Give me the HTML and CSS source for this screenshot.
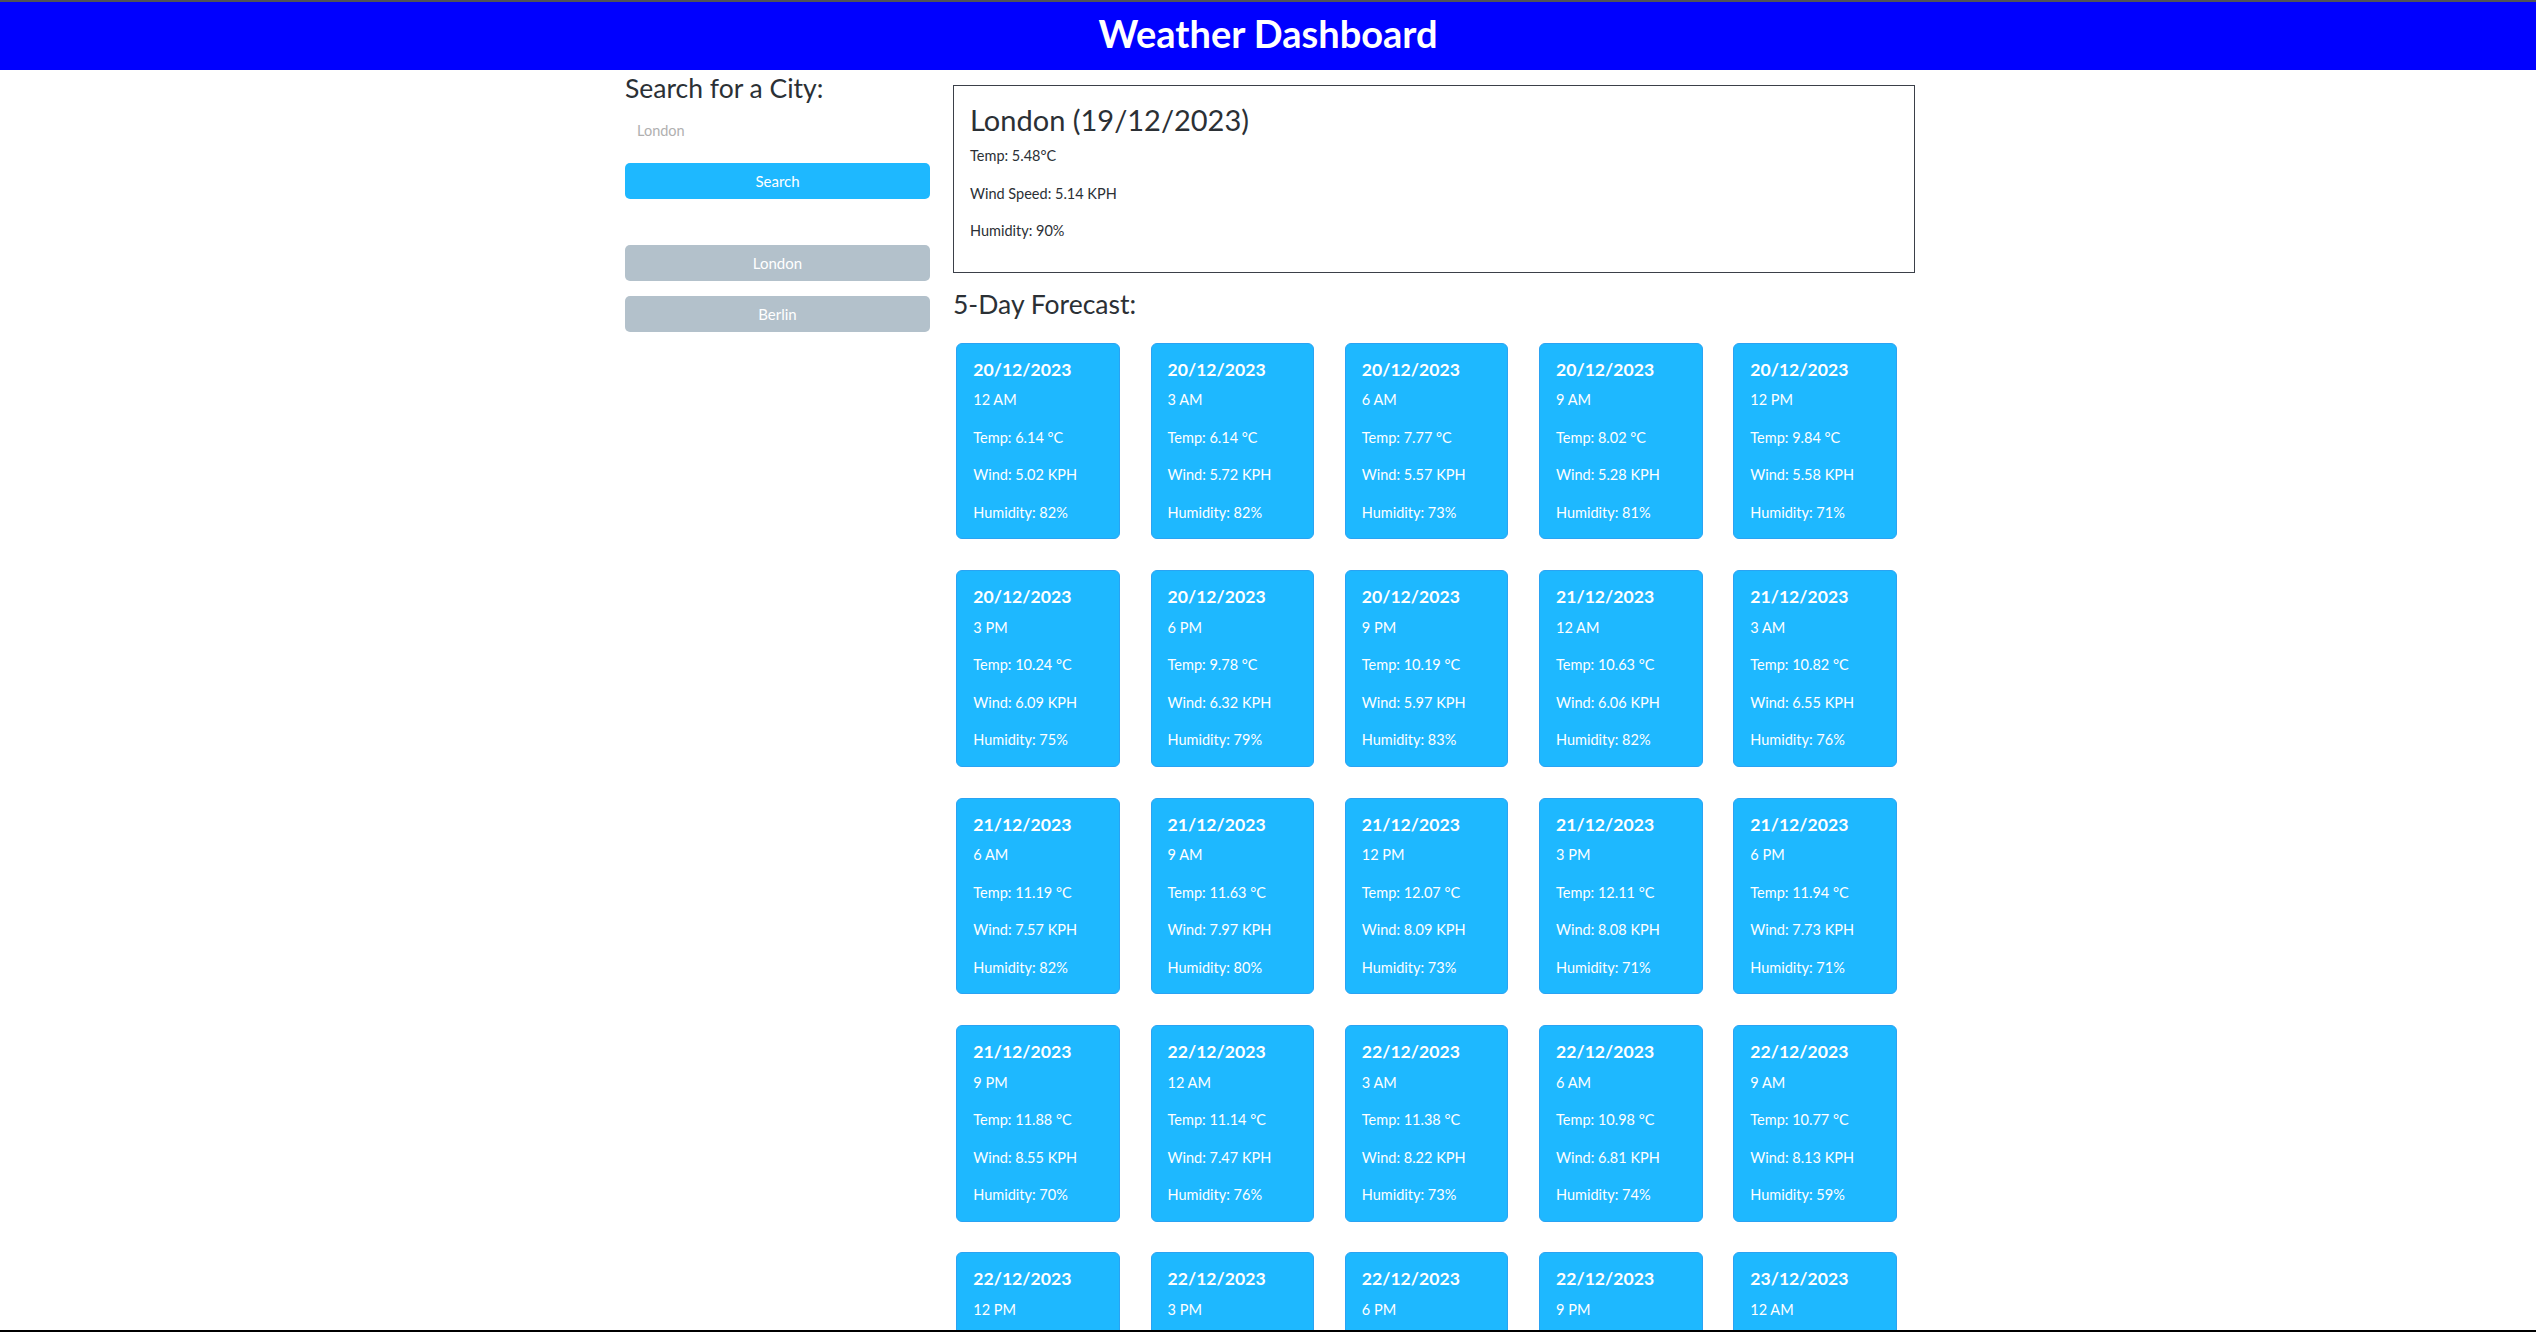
FILE: index.html
```html
<!DOCTYPE html>
<html lang="en">
<head>
<meta charset="utf-8">
<title>Weather Dashboard</title>
<link rel="stylesheet" href="styles.css">
</head>
<body>
<header class="topbar"><h1 class="title">Weather Dashboard</h1></header>
<div class="container">
  <aside class="sidebar">
    <h4 class="side-title">Search for a City:</h4>
    <input class="city-input" type="text" placeholder="London">
    <button class="btn btn-search">Search</button>
    <div class="history">
      <button class="btn btn-history">London</button>
      <button class="btn btn-history">Berlin</button>
    </div>
  </aside>
  <main class="content">
    <section class="current">
      <h2 class="current-title">London (19/12/2023)</h2>
      <p class="current-line">Temp: 5.48°C</p>
      <p class="current-line">Wind Speed: 5.14 KPH</p>
      <p class="current-line">Humidity: 90%</p>
    </section>
    <h4 class="forecast-title">5-Day Forecast:</h4>
    <div class="forecast-grid">
      <div class="card"><h5 class="card-date">20/12/2023</h5><p>12 AM</p><p>Temp: 6.14 °C</p><p>Wind: 5.02 KPH</p><p>Humidity: 82%</p></div>
      <div class="card"><h5 class="card-date">20/12/2023</h5><p>3 AM</p><p>Temp: 6.14 °C</p><p>Wind: 5.72 KPH</p><p>Humidity: 82%</p></div>
      <div class="card"><h5 class="card-date">20/12/2023</h5><p>6 AM</p><p>Temp: 7.77 °C</p><p>Wind: 5.57 KPH</p><p>Humidity: 73%</p></div>
      <div class="card"><h5 class="card-date">20/12/2023</h5><p>9 AM</p><p>Temp: 8.02 °C</p><p>Wind: 5.28 KPH</p><p>Humidity: 81%</p></div>
      <div class="card"><h5 class="card-date">20/12/2023</h5><p>12 PM</p><p>Temp: 9.84 °C</p><p>Wind: 5.58 KPH</p><p>Humidity: 71%</p></div>

      <div class="card"><h5 class="card-date">20/12/2023</h5><p>3 PM</p><p>Temp: 10.24 °C</p><p>Wind: 6.09 KPH</p><p>Humidity: 75%</p></div>
      <div class="card"><h5 class="card-date">20/12/2023</h5><p>6 PM</p><p>Temp: 9.78 °C</p><p>Wind: 6.32 KPH</p><p>Humidity: 79%</p></div>
      <div class="card"><h5 class="card-date">20/12/2023</h5><p>9 PM</p><p>Temp: 10.19 °C</p><p>Wind: 5.97 KPH</p><p>Humidity: 83%</p></div>
      <div class="card"><h5 class="card-date">21/12/2023</h5><p>12 AM</p><p>Temp: 10.63 °C</p><p>Wind: 6.06 KPH</p><p>Humidity: 82%</p></div>
      <div class="card"><h5 class="card-date">21/12/2023</h5><p>3 AM</p><p>Temp: 10.82 °C</p><p>Wind: 6.55 KPH</p><p>Humidity: 76%</p></div>

      <div class="card"><h5 class="card-date">21/12/2023</h5><p>6 AM</p><p>Temp: 11.19 °C</p><p>Wind: 7.57 KPH</p><p>Humidity: 82%</p></div>
      <div class="card"><h5 class="card-date">21/12/2023</h5><p>9 AM</p><p>Temp: 11.63 °C</p><p>Wind: 7.97 KPH</p><p>Humidity: 80%</p></div>
      <div class="card"><h5 class="card-date">21/12/2023</h5><p>12 PM</p><p>Temp: 12.07 °C</p><p>Wind: 8.09 KPH</p><p>Humidity: 73%</p></div>
      <div class="card"><h5 class="card-date">21/12/2023</h5><p>3 PM</p><p>Temp: 12.11 °C</p><p>Wind: 8.08 KPH</p><p>Humidity: 71%</p></div>
      <div class="card"><h5 class="card-date">21/12/2023</h5><p>6 PM</p><p>Temp: 11.94 °C</p><p>Wind: 7.73 KPH</p><p>Humidity: 71%</p></div>

      <div class="card"><h5 class="card-date">21/12/2023</h5><p>9 PM</p><p>Temp: 11.88 °C</p><p>Wind: 8.55 KPH</p><p>Humidity: 70%</p></div>
      <div class="card"><h5 class="card-date">22/12/2023</h5><p>12 AM</p><p>Temp: 11.14 °C</p><p>Wind: 7.47 KPH</p><p>Humidity: 76%</p></div>
      <div class="card"><h5 class="card-date">22/12/2023</h5><p>3 AM</p><p>Temp: 11.38 °C</p><p>Wind: 8.22 KPH</p><p>Humidity: 73%</p></div>
      <div class="card"><h5 class="card-date">22/12/2023</h5><p>6 AM</p><p>Temp: 10.98 °C</p><p>Wind: 6.81 KPH</p><p>Humidity: 74%</p></div>
      <div class="card"><h5 class="card-date">22/12/2023</h5><p>9 AM</p><p>Temp: 10.77 °C</p><p>Wind: 8.13 KPH</p><p>Humidity: 59%</p></div>

      <div class="card"><h5 class="card-date">22/12/2023</h5><p>12 PM</p><p>Temp: 10.52 °C</p><p>Wind: 7.91 KPH</p><p>Humidity: 61%</p></div>
      <div class="card"><h5 class="card-date">22/12/2023</h5><p>3 PM</p><p>Temp: 10.13 °C</p><p>Wind: 7.44 KPH</p><p>Humidity: 66%</p></div>
      <div class="card"><h5 class="card-date">22/12/2023</h5><p>6 PM</p><p>Temp: 9.87 °C</p><p>Wind: 7.02 KPH</p><p>Humidity: 70%</p></div>
      <div class="card"><h5 class="card-date">22/12/2023</h5><p>9 PM</p><p>Temp: 9.61 °C</p><p>Wind: 6.88 KPH</p><p>Humidity: 74%</p></div>
      <div class="card"><h5 class="card-date">23/12/2023</h5><p>12 AM</p><p>Temp: 9.40 °C</p><p>Wind: 6.71 KPH</p><p>Humidity: 77%</p></div>
    </div>
  </main>
</div>
<div class="frame-bottom"></div>
</body>
</html>
```

FILE: styles.css
```css
* { box-sizing: border-box; }

html, body {
  margin: 0;
  padding: 0;
  background: #ffffff;
}

body {
  font-family: Lato, "Open Sans", "Noto Sans", sans-serif;
  color: #212529;
}

.topbar {
  height: 70px;
  border-top: 2px solid #505258;
  background: #0000ff;
  display: flex;
  align-items: center;
  justify-content: center;
}

.title {
  margin: 0 0 5px;
  color: #ffffff;
  font-size: 38px;
  font-weight: 700;
  line-height: 1.2;
}

.container {
  width: 1294px;
  margin: 0 auto;
  padding-left: 4px;
  display: flex;
  align-items: flex-start;
  gap: 23px;
}

.sidebar {
  width: 305px;
  flex: 0 0 305px;
  display: flex;
  flex-direction: column;
}

.side-title {
  margin: 3px 0 0;
  font-size: 26.5px;
  font-weight: 400;
  line-height: 1.2;
  color: #2b3035;
}

.city-input {
  display: block;
  width: 100%;
  height: 36px;
  margin-top: 8px;
  padding: 0 12px;
  border: none;
  outline: none;
  font-family: Lato, "Open Sans", sans-serif;
  font-size: 14.5px;
  color: #333;
  background: transparent;
}

.city-input::placeholder {
  color: #b0b0b0;
}

.btn {
  display: block;
  width: 100%;
  height: 36px;
  border: none;
  border-radius: 5px;
  color: #ffffff;
  font-family: Lato, "Open Sans", sans-serif;
  font-size: 15px;
  cursor: pointer;
}

.btn-search {
  margin-top: 14px;
  background: #1eb8ff;
}

.history {
  margin-top: 46px;
  display: flex;
  flex-direction: column;
  gap: 15px;
}

.btn-history {
  background: #b3c1cb;
}

.content {
  width: 962px;
  flex: 0 0 962px;
  margin-top: 15px;
}

.current {
  border: 1px solid #3b4049;
  padding: 16px 16px 14px;
  height: 188px;
}

.current-title {
  margin: 0 0 7px;
  font-size: 29px;
  font-weight: 400;
  line-height: 36px;
  color: #2b3035;
}

.current-line {
  margin: 0 0 16.5px;
  font-size: 14.5px;
  line-height: 21px;
  color: #2b3035;
}

.forecast-title {
  margin: 16px 0 22px;
  font-size: 26.5px;
  font-weight: 400;
  line-height: 1.2;
  color: #2b3035;
}

.forecast-grid {
  display: grid;
  grid-template-columns: repeat(5, 163.5px);
  column-gap: 30.75px;
  row-gap: 30.8px;
  padding-left: 3.3px;
  padding-bottom: 40px;
}

.card {
  background: #1eb8ff;
  border: 1px solid #2aa3f3;
  border-radius: 6px;
  padding: 15px 16px 15.5px;
  color: #ffffff;
}

.card-date {
  margin: 0 0 9.5px;
  font-size: 17.6px;
  font-weight: 700;
  line-height: 1.2;
}

.card p {
  margin: 0 0 16.5px;
  font-size: 14.5px;
  line-height: 21px;
}

.card p:last-child {
  margin-bottom: 0;
}

.frame-bottom {
  position: fixed;
  left: 0;
  right: 0;
  bottom: 0;
  height: 2px;
  background: #000000;
}
```
